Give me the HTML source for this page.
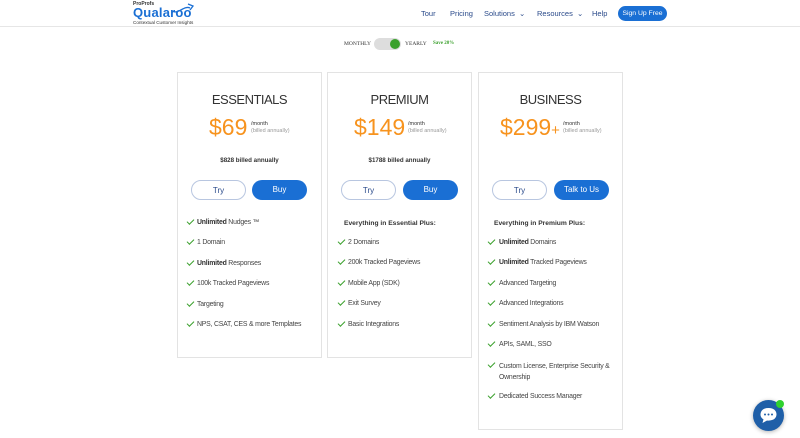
<!DOCTYPE html>
<html><head><meta charset="utf-8"><style>
*{margin:0;padding:0;box-sizing:border-box}
body{width:800px;height:438px;overflow:hidden;background:#fff;font-family:"Liberation Sans",Arial,sans-serif;position:relative;color:#333}
.a{position:absolute;white-space:nowrap}
.hdr{position:absolute;left:0;top:0;width:800px;height:27px;border-bottom:1px solid #e6e6e6}
.nav{font-size:7.5px;color:#2a4a8a;top:9px}
.card{position:absolute;border:1px solid #e3e3e3;background:#fff}
.t{font-size:13px;color:#333;text-align:center;width:145px;letter-spacing:-.5px}
.p{font-size:23px;color:#f7931e;font-weight:400}
.m{font-size:5.5px;color:#333;line-height:7px}
.m span{color:#999}
.bl{font-size:6.2px;font-weight:bold;color:#333;text-align:center;width:145px}
.btn{position:absolute;height:20px;border-radius:10px;font-size:8px;text-align:center;line-height:20px}
.try{border:1px solid #b8c6e0;color:#2a4a8a;background:#fff}
.buy{background:#1a6fd4;color:#fff}
.f{font-size:6.9px;letter-spacing:-.2px;color:#444;line-height:9px}
.f b{color:#333}
.ck{position:absolute;width:7px;height:4px;border-left:1.6px solid #3aa02c;border-bottom:1.6px solid #3aa02c;transform:rotate(-45deg)}
.h{font-size:6.7px;font-weight:bold;color:#333}
</style></head><body>
<div class="hdr"></div>
<div class="a" style="left:133px;top:1px;font-size:5px;font-weight:bold;color:#333">ProProfs</div>
<div class="a" style="left:133px;top:5px;font-size:13px;font-weight:bold;color:#1a6fd4;letter-spacing:.2px">Qualaroo</div>
<svg class="a" style="left:170px;top:1px" width="26" height="14"><path d="M2 10 C8 14 14 4 20 7 M18 3 L23 5 L20 9" stroke="#1a6fd4" stroke-width="1.3" fill="none"/></svg>
<div class="a" style="left:133px;top:20px;font-size:4.6px;color:#333">Contextual Customer Insights</div>
<div class="a nav" style="left:421px">Tour</div>
<div class="a nav" style="left:450px">Pricing</div>
<div class="a nav" style="left:484px">Solutions &nbsp;⌄</div>
<div class="a nav" style="left:537px">Resources &nbsp;⌄</div>
<div class="a nav" style="left:592px">Help</div>
<div class="a" style="left:618px;top:6px;width:49px;height:15px;border-radius:8px;background:#1a6fd4;color:#fff;font-size:6.8px;text-align:center;line-height:15px">Sign Up Free</div>

<div class="a" style="left:344px;top:41px;font-size:5.5px;font-family:'Liberation Serif',serif;color:#333">MONTHLY</div>
<div class="a" style="left:374px;top:38px;width:27px;height:12px;border-radius:6px;background:#ddd"></div>
<div class="a" style="left:390px;top:39px;width:10px;height:10px;border-radius:5px;background:#3aa02c"></div>
<div class="a" style="left:405px;top:41px;font-size:5.5px;font-family:'Liberation Serif',serif;color:#333">YEARLY</div>
<div class="a" style="left:433px;top:41px;font-size:5px;font-family:'Liberation Serif',serif;color:#3aa02c;font-weight:bold">Save 20%</div>

<div class="card" style="left:177px;top:72px;width:145px;height:286px"></div>
<div class="card" style="left:327px;top:72px;width:145px;height:286px"></div>
<div class="card" style="left:478px;top:72px;width:145px;height:358px"></div>

<div class="a t" style="left:177px;top:92px">ESSENTIALS</div>
<div class="a p" style="left:209px;top:114px">$69</div>
<div class="a m" style="left:251px;top:121px">/month<br><span>(billed annually)</span></div>
<div class="a bl" style="left:177px;top:157px">$828 billed annually</div>
<div class="btn try" style="left:191px;top:180px;width:55px">Try</div>
<div class="btn buy" style="left:252px;top:180px;width:55px">Buy</div>

<div class="a t" style="left:327px;top:92px">PREMIUM</div>
<div class="a p" style="left:354px;top:114px">$149</div>
<div class="a m" style="left:408px;top:121px">/month<br><span>(billed annually)</span></div>
<div class="a bl" style="left:327px;top:157px">$1788 billed annually</div>
<div class="btn try" style="left:341px;top:180px;width:55px">Try</div>
<div class="btn buy" style="left:403px;top:180px;width:55px">Buy</div>

<div class="a t" style="left:478px;top:92px">BUSINESS</div>
<div class="a p" style="left:500px;top:114px">$299<span style="font-size:15px">+</span></div>
<div class="a m" style="left:563px;top:121px">/month<br><span>(billed annually)</span></div>
<div class="btn try" style="left:492px;top:180px;width:55px">Try</div>
<div class="btn buy" style="left:554px;top:180px;width:55px">Talk to Us</div>

<div class="ck" style="left:187px;top:219px"></div><div class="a f" style="left:197px;top:218px"><b>Unlimited</b> Nudges ™</div>
<div class="ck" style="left:187px;top:239px"></div><div class="a f" style="left:197px;top:238px">1 Domain</div>
<div class="ck" style="left:187px;top:260px"></div><div class="a f" style="left:197px;top:259px"><b>Unlimited</b> Responses</div>
<div class="ck" style="left:187px;top:280px"></div><div class="a f" style="left:197px;top:279px">100k Tracked Pageviews</div>
<div class="ck" style="left:187px;top:301px"></div><div class="a f" style="left:197px;top:300px">Targeting</div>
<div class="ck" style="left:187px;top:321px"></div><div class="a f" style="left:197px;top:320px">NPS, CSAT, CES &amp; more Templates</div>

<div class="a h" style="left:344px;top:220px">Everything in Essential Plus:</div>
<div class="ck" style="left:338px;top:239px"></div><div class="a f" style="left:348px;top:238px">2 Domains</div>
<div class="ck" style="left:338px;top:259px"></div><div class="a f" style="left:348px;top:258px">200k Tracked Pageviews</div>
<div class="ck" style="left:338px;top:280px"></div><div class="a f" style="left:348px;top:279px">Mobile App (SDK)</div>
<div class="ck" style="left:338px;top:300px"></div><div class="a f" style="left:348px;top:299px">Exit Survey</div>
<div class="ck" style="left:338px;top:321px"></div><div class="a f" style="left:348px;top:320px">Basic Integrations</div>

<div class="a h" style="left:494px;top:220px">Everything in Premium Plus:</div>
<div class="ck" style="left:488px;top:239px"></div><div class="a f" style="left:499px;top:238px"><b>Unlimited</b> Domains</div>
<div class="ck" style="left:488px;top:259px"></div><div class="a f" style="left:499px;top:258px"><b>Unlimited</b> Tracked Pageviews</div>
<div class="ck" style="left:488px;top:280px"></div><div class="a f" style="left:499px;top:279px">Advanced Targeting</div>
<div class="ck" style="left:488px;top:300px"></div><div class="a f" style="left:499px;top:299px">Advanced Integrations</div>
<div class="ck" style="left:488px;top:321px"></div><div class="a f" style="left:499px;top:320px">Sentiment Analysis by IBM Watson</div>
<div class="ck" style="left:488px;top:341px"></div><div class="a f" style="left:499px;top:340px">APIs, SAML, SSO</div>
<div class="ck" style="left:488px;top:362px"></div><div class="a f" style="left:499px;top:361px;line-height:11px">Custom License, Enterprise Security &amp;<br>Ownership</div>
<div class="ck" style="left:488px;top:393px"></div><div class="a f" style="left:499px;top:392px">Dedicated Success Manager</div>

<div class="a" style="left:753px;top:400px;width:31px;height:31px;border-radius:50%;background:#1f5fa8;box-shadow:0 1px 4px rgba(0,0,0,.3)"></div>
<svg class="a" style="left:758px;top:405px" width="21" height="21"><path d="M10.5 3 C5 3 2.5 6 2.5 9.5 C2.5 12 4 13.5 5.5 14.3 L4.5 18 L9 15.5 C9.5 15.6 10 15.6 10.5 15.6 C16 15.6 18.5 12.8 18.5 9.3 C18.5 6 16 3 10.5 3Z" fill="#fff"/><circle cx="7" cy="9.5" r="1" fill="#1f5fa8"/><circle cx="10.5" cy="9.5" r="1" fill="#1f5fa8"/><circle cx="14" cy="9.5" r="1" fill="#1f5fa8"/></svg>
<div class="a" style="left:776px;top:400px;width:8px;height:8px;border-radius:50%;background:#2fd12f"></div>
</body></html>
